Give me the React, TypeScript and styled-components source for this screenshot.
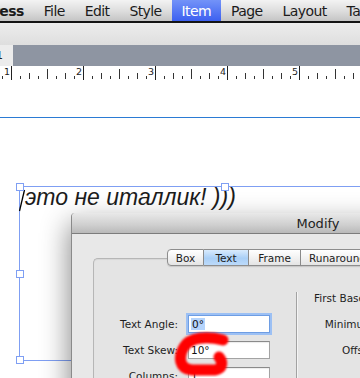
import styled, { createGlobalStyle } from 'styled-components';

const GlobalStyle = createGlobalStyle`
  html, body {
    margin: 0;
    padding: 0;
    background: #fff;
    overflow: hidden;
  }
  body {
    font-family: "DejaVu Sans", "Liberation Sans", sans-serif;
  }
`;

const Screen = styled.div`
  width: 360px;
  height: 378px;
  overflow: hidden;
  display: flex;
  flex-direction: column;
`;

const MenuBar = styled.div`
  flex: none;
  height: 21px;
  display: flex;
  align-items: stretch;
  white-space: nowrap;
  background: linear-gradient(#f3f3f3, #dcdcdc 55%, #c4c4c4);
  border-bottom: 2px solid #151515;
`;

const MenuItem = styled.div<{ $active?: boolean; $app?: boolean }>`
  display: flex;
  align-items: center;
  padding: 0 10px;
  font-size: 14px;
  letter-spacing: -0.6px;
  color: ${p => (p.$active ? '#fff' : '#1b1b1b')};
  background: ${p => (p.$active ? 'linear-gradient(#7393f8, #3c60f0)' : 'transparent')};
  font-weight: ${p => (p.$app ? 'bold' : 'normal')};
  ${p => p.$app && 'padding-left: 0; margin-left: -7px;'}
`;

const Toolbar = styled.div`
  flex: none;
  height: 22px;
  background: linear-gradient(#ededed, #dedede);
`;

const DocTabs = styled.div`
  flex: none;
  height: 21px;
  display: flex;
  background: #8e95a2;
`;

const DocTab = styled.div`
  display: flex;
  align-items: center;
  margin-left: -4px;
  padding-right: 10px;
  font-size: 11px;
  color: #222;
  background: #ececec;
`;

const RulerBar = styled.div`
  flex: none;
  height: 18px;
  background: #fff;
`;

const Page = styled.div`
  flex: 1;
  position: relative;
  background: #fff;
`;

const Guide = styled.div`
  position: absolute;
  left: 0;
  right: 0;
  top: 33px;
  height: 1px;
  background: #2b7bd4;
`;

const TextBox = styled.div`
  position: absolute;
  left: 19px;
  top: 102px;
  width: 412px;
  height: 175px;
  box-sizing: border-box;
  border: 1px solid #7f9ff3;
  padding-left: 5px;
  font-family: "Liberation Sans", Arial, sans-serif;
  font-style: italic;
  font-size: 23px;
  line-height: 20px;
  color: #1c1c1c;
  white-space: nowrap;
`;

const Handle = styled.span<{ $x: string; $y: string }>`
  position: absolute;
  left: ${p => p.$x};
  top: ${p => p.$y};
  width: 6px;
  height: 6px;
  margin: -4px 0 0 -4px;
  border: 1px solid #7f9ff3;
  background: #fff;
`;

const Caret = styled.svg`
  position: absolute;
  left: -2px;
  top: 2px;
`;

const Dialog = styled.div`
  position: absolute;
  left: 71px;
  top: 129px;
  width: 492px;
  height: 320px;
  background: #e8e8e8;
  border-left: 1px solid #8a8a8a;
  border-radius: 4px 4px 0 0;
  box-shadow: -2px 10px 28px rgba(0, 0, 0, 0.45);
  display: flex;
  flex-direction: column;
`;

const TitleBar = styled.div`
  height: 20px;
  flex: none;
  display: flex;
  align-items: center;
  justify-content: center;
  border-radius: 4px 4px 0 0;
  background: linear-gradient(#e9e9e9, #cfcfcf 60%, #b9b9b9);
  border-bottom: 1px solid #7c7c7c;
  font-size: 13px;
  color: #222;
`;

const DialogBody = styled.div`
  display: flex;
  flex-direction: column;
  padding: 15px 0 0 21px;
`;

const Segments = styled.div`
  display: flex;
  margin-left: 74px;
  position: relative;
  z-index: 1;
`;

const Segment = styled.div<{ $selected?: boolean; $w: number }>`
  width: ${p => p.$w}px;
  height: 17px;
  box-sizing: border-box;
  display: flex;
  align-items: center;
  justify-content: center;
  font-size: 10.5px;
  color: #1c1c1c;
  border: 1px solid #8d8d8d;
  border-left: none;
  background: ${p =>
    p.$selected ? 'linear-gradient(#d9ebfd, #a9cff6 55%, #bcdafa)' : 'linear-gradient(#ffffff, #f1f1f1 55%, #e4e4e4)'};
  box-shadow: 0 1px 1px rgba(0, 0, 0, 0.12);
  &:first-child {
    border-left: 1px solid #8d8d8d;
    border-radius: 4px 0 0 4px;
  }
`;

const GroupBox = styled.div`
  margin-top: -8px;
  height: 260px;
  display: flex;
  align-items: flex-start;
  border: 1px solid #b6b6b6;
  border-right: none;
  border-radius: 5px 0 0 0;
  background: #e4e4e4;
  box-shadow: inset 0 1px 1px rgba(0, 0, 0, 0.06);
`;

const FormColumn = styled.div<{ $top: number; $label: number }>`
  display: grid;
  grid-template-columns: ${p => p.$label}px 82px;
  grid-auto-rows: 18px;
  column-gap: 10px;
  row-gap: 8px;
  padding-top: ${p => p.$top}px;
`;

const Label = styled.div`
  display: flex;
  align-items: center;
  justify-content: flex-end;
  font-size: 10.5px;
  color: #1e1e1e;
  white-space: nowrap;
`;

const Heading = styled.div`
  grid-column: 1 / 3;
  display: flex;
  align-items: center;
  font-size: 10.5px;
  color: #1e1e1e;
  white-space: nowrap;
`;

const Field = styled.div<{ $focused?: boolean }>`
  box-sizing: border-box;
  height: 18px;
  display: flex;
  align-items: center;
  padding-left: 2px;
  font-size: 10.5px;
  color: #111;
  background: #fff;
  border: 1px solid ${p => (p.$focused ? '#6e9de3' : '#a3a3a3')};
  border-top-color: ${p => (p.$focused ? '#6e9de3' : '#8a8a8a')};
  box-shadow: ${p => (p.$focused ? '0 0 0 2px #9cc0f4' : 'inset 0 1px 1px rgba(0,0,0,0.08)')};
`;

const Selected = styled.span`
  background: #b5d4fc;
  padding: 0 1px;
`;

const Divider = styled.div`
  width: 1px;
  height: 200px;
  margin: 33px 17px 0 26px;
  background: #a2a2a2;
  box-shadow: 1px 0 0 #f4f4f4;
`;

const Scribble = styled.svg`
  position: absolute;
  left: 167px;
  top: 245px;
  overflow: visible;
`;

function Ruler() {
  const ticks = [];
  for (let i = -8; i < 45; i++) {
    const x = 11 + i * 9;
    if (x < 0 || x > 360) continue;
    const k = ((i % 8) + 8) % 8;
    if (k === 0) {
      ticks.push(<line key={i} x1={x + 0.5} y1={0} x2={x + 0.5} y2={14} stroke="#222" />);
      ticks.push(
        <text key={'n' + i} x={x - 1} y={9} fontSize="9.5" textAnchor="end" fill="#222" fontFamily="DejaVu Sans, sans-serif">
          {Math.floor(i / 8) + 1}
        </text>,
      );
    } else {
      const h = k === 4 ? 10 : k % 2 === 0 ? 6 : 3;
      ticks.push(<line key={i} x1={x + 0.5} y1={13 - h} x2={x + 0.5} y2={13} stroke="#333" />);
    }
  }
  return (
    <svg width="360" height="18">
      {ticks}
    </svg>
  );
}

export default function App() {
  return (
    <Screen>
      <GlobalStyle />
      <MenuBar>
        <MenuItem $app>ress</MenuItem>
        <MenuItem>File</MenuItem>
        <MenuItem>Edit</MenuItem>
        <MenuItem>Style</MenuItem>
        <MenuItem $active>Item</MenuItem>
        <MenuItem>Page</MenuItem>
        <MenuItem>Layout</MenuItem>
        <MenuItem>Table</MenuItem>
      </MenuBar>
      <Toolbar />
      <DocTabs>
        <DocTab>1</DocTab>
      </DocTabs>
      <RulerBar>
        <Ruler />
      </RulerBar>
      <Page>
        <Guide />
        <TextBox>
          это не италлик! )))
          <Caret width="8" height="24">
            <line x1="6.5" y1="1" x2="1.5" y2="22" stroke="#000" strokeWidth="1.3" />
          </Caret>
          <Handle $x="0" $y="0" />
          <Handle $x="50%" $y="0" />
          <Handle $x="0" $y="50%" />
          <Handle $x="0" $y="100%" />
        </TextBox>
        <Dialog>
          <TitleBar>Modify</TitleBar>
          <DialogBody>
            <Segments>
              <Segment $w={37}>Box</Segment>
              <Segment $w={45} $selected>Text</Segment>
              <Segment $w={52}>Frame</Segment>
              <Segment $w={74}>Runaround</Segment>
              <Segment $w={74}>Clipping</Segment>
            </Segments>
            <GroupBox>
              <FormColumn $top={56} $label={84}>
                <Label>Text Angle:</Label>
                <Field $focused>
                  <Selected>0°</Selected>
                </Field>
                <Label>Text Skew:</Label>
                <Field>10°</Field>
                <Label>Columns:</Label>
                <Field>1</Field>
              </FormColumn>
              <Divider />
              <FormColumn $top={30} $label={63}>
                <Heading>First Baseline</Heading>
                <Label>Minimum:</Label>
                <Field>Ascent</Field>
                <Label>Offset:</Label>
                <Field>0"</Field>
              </FormColumn>
            </GroupBox>
          </DialogBody>
        </Dialog>
        <Scribble width="64" height="50">
          <defs>
            <filter id="soft" x="-20%" y="-20%" width="140%" height="140%">
              <feGaussianBlur stdDeviation="0.8" />
            </filter>
          </defs>
          <path
            d="M56 11 C 40 7, 23 8, 17 18 C 11 28, 12 40, 25 41 L 48 41 C 56 40, 56 33, 52 28"
            fill="none"
            stroke="#f00"
            strokeWidth="11"
            strokeLinecap="round"
            strokeLinejoin="round"
            filter="url(#soft)"
          />
        </Scribble>
      </Page>
    </Screen>
  );
}
